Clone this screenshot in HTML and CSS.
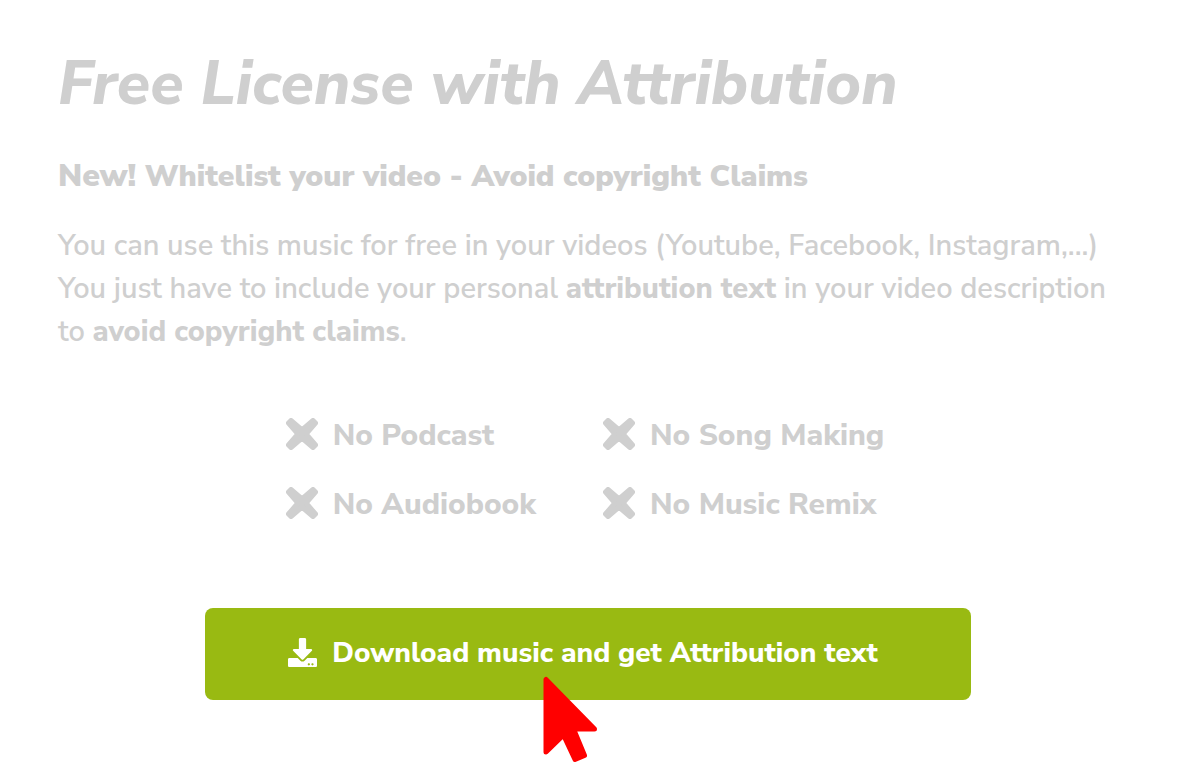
FILE: index.html
```html
<!DOCTYPE html>
<html lang="en">
<head>
<meta charset="utf-8">
<meta name="viewport" content="width=device-width, initial-scale=1">
<title>Free License with Attribution</title>
<link rel="stylesheet" href="styles.css">
</head>
<body>
<svg class="sprite" aria-hidden="true">
  <symbol id="cross" viewBox="0 0 32 32"><path d="M5 2.500 16 12 27 2.500 29.500 5 20 16 29.500 27 27 29.500 16 20 5 29.500 2.500 27 12 16 2.500 5Z" fill="currentColor" stroke="currentColor" stroke-width="5" stroke-linejoin="round"/></symbol>
</svg>
<main class="license">
  <h1 class="title">Free License with Attribution</h1>
  <h2 class="subtitle"><span class="new">New!</span> Whitelist your video - Avoid copyright Claims</h2>
  <p class="intro">You can use this music for free in your videos (Youtube, Facebook, Instagram,...)<br>You just have to include your personal <strong>attribution text</strong> in your video description<br>to <strong>avoid copyright claims</strong>.</p>
  <ul class="limits">
    <li class="limit"><svg class="cross" aria-hidden="true"><use href="#cross"/></svg>No Podcast</li>
    <li class="limit"><svg class="cross" aria-hidden="true"><use href="#cross"/></svg>No Song Making</li>
    <li class="limit"><svg class="cross" aria-hidden="true"><use href="#cross"/></svg>No Audiobook</li>
    <li class="limit"><svg class="cross" aria-hidden="true"><use href="#cross"/></svg>No Music Remix</li>
  </ul>
  <div class="action">
    <button class="download" type="button">
      <svg class="download-icon" viewBox="0 0 512 512" aria-hidden="true"><path fill="currentColor" d="M216 0h80c13.300 0 24 10.700 24 24v168h87.700c17.800 0 26.700 21.500 14.100 34.100L269.700 378.300c-7.500 7.500-19.800 7.500-27.300 0L90.100 226.100c-12.600-12.600-3.700-34.100 14.100-34.100H192V24c0-13.300 10.700-24 24-24zm296 376v112c0 13.300-10.700 24-24 24H24c-13.300 0-24-10.700-24-24V376c0-13.300 10.700-24 24-24h146.700l49 49c20.100 20.100 52.500 20.100 72.600 0l49-49H488c13.300 0 24 10.700 24 24zm-124 88c0-11-9-20-20-20s-20 9-20 20 9 20 20 20 20-9 20-20zm64 0c0-11-9-20-20-20s-20 9-20 20 9 20 20 20 20-9 20-20z"/></svg>
      Download music and get Attribution text
    </button>
    <svg class="pointer" viewBox="0 0 56 88" aria-hidden="true"><path d="M4 3.500V76L21.500 59 33 83.500 42.500 79.500 31.500 53H52.500Z" fill="#f00" stroke="#f00" stroke-width="5" stroke-linejoin="round"/></svg>
  </div>
</main>
</body>
</html>
```
FILE: styles.css
```css
* { box-sizing: border-box; }
body { margin: 0; background: #fff; color: #cfcfcf; font-family: "Nunito Sans", Nunito, "Open Sans", "Noto Sans", sans-serif; }
.sprite { position: absolute; width: 0; height: 0; }
.license { min-height: 100vh; padding: 49px 62px 0 58px; }
.title { margin: 0; font-size: 61px; line-height: 70px; font-style: italic; font-weight: 800; }
.subtitle { margin: 36px 0 0; font-size: 30px; line-height: 42px; font-weight: 900; }
.new { font-size: 32px; }
.intro { margin: 26px 0 0; font-size: 29px; line-height: 43px; font-weight: 600; }
.intro strong { font-weight: 800; }
.limits { display: grid; grid-template-columns: max-content max-content; justify-content: center; column-gap: 67px; row-gap: 27px; margin: 62px 0 0; padding: 0 6px 0 0; list-style: none; }
.limit { display: flex; align-items: center; gap: 15px; font-size: 30px; line-height: 42px; font-weight: 800; }
.cross { width: 32px; height: 32px; margin-bottom: 4px; }
.action { position: relative; display: flex; justify-content: center; margin-top: 82px; }
.download { display: flex; align-items: center; justify-content: center; gap: 15px; width: 766px; max-width: 100%; min-height: 92px; padding: 0 10px 3px 0; border: 0; border-radius: 8px; background: #99ba12; color: #fff; font: inherit; font-size: 28px; font-weight: 800; }
.download-icon { width: 29px; height: 29px; }
.pointer { position: absolute; left: 484px; top: 68px; width: 56px; height: 88px; }
```
